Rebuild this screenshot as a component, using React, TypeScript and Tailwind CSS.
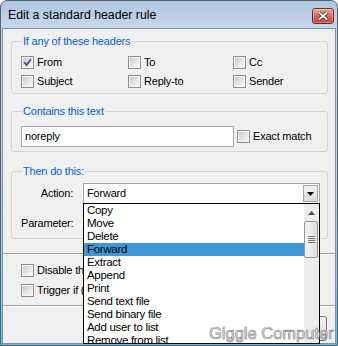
import React from "react";

const actions = [
  "Copy",
  "Move",
  "Delete",
  "Forward",
  "Extract",
  "Append",
  "Print",
  "Send text file",
  "Send binary file",
  "Add user to list",
  "Remove from list",
];

function CheckBox({ checked = false }: { checked?: boolean }) {
  return (
    <span className="flex h-[13px] w-[13px] shrink-0 border border-[#8f8f8f] bg-[#f4f4f4] p-[1px]">
      <span className="flex flex-1 items-center justify-center bg-gradient-to-br from-[#c8c8c8] via-[#e4e4e4] to-[#f8f8f8]">
        {checked && (
          <svg width="9" height="9" viewBox="0 0 9 9">
            <path d="M1.2 4.2 L3.6 7 L8 1.2" fill="none" stroke="#3e4f8e" strokeWidth="1.8" />
          </svg>
        )}
      </span>
    </span>
  );
}

function Check({ label, checked, className = "" }: { label: string; checked?: boolean; className?: string }) {
  return (
    <label className={`flex items-center gap-[3px] whitespace-nowrap ${className}`}>
      <CheckBox checked={checked} />
      <span>{label}</span>
    </label>
  );
}

function Group({ title, className = "", children }: { title: string; className?: string; children: React.ReactNode }) {
  return (
    <fieldset className={`ml-[8px] mr-[7px] rounded-[3px] border border-[#d3d3d3] pl-[9px] pr-[7px] ${className}`}>
      <legend className="ml-[1px] px-[1px] leading-[14px] text-[#0a5fd0]">{title}</legend>
      {children}
    </fieldset>
  );
}

function CloseButton() {
  return (
    <div className="flex h-[16px] w-[22px] items-center justify-center rounded-[3px] border border-[#6e2b22] bg-gradient-to-b from-[#e9ab9b] via-[#d26c5d] to-[#bf4a3b] shadow-[inset_0_0_0_1px_rgba(255,255,255,0.3)]">
      <svg width="12" height="10" viewBox="0 0 12 10">
        <path d="M2 1.5 L10 8.5 M10 1.5 L2 8.5" stroke="#4a1812" strokeWidth="3.4" />
        <path d="M2 1.5 L10 8.5 M10 1.5 L2 8.5" stroke="#ffffff" strokeWidth="1.9" />
      </svg>
    </div>
  );
}

export default function App() {
  return (
    <div className="relative h-[346px] w-[338px] overflow-hidden bg-white font-['Liberation_Sans',Arial,sans-serif] text-[11px] tracking-[-0.2px] text-black">
      <div className="flex h-full w-full flex-col rounded-t-[7px] border border-[#56626f] bg-[linear-gradient(to_bottom,#afc6df_0px,#c5d8ec_27px,#bed4ea_150px,#8fcbec_280px,#4fc2f0_346px)] px-[1px] pb-[1px]">
        {/* title bar */}
        <div className="flex h-[27px] items-center justify-between pl-[6px] pr-[2px] pt-[2px]">
          <span className="text-[12.3px] tracking-normal">Edit a standard header rule</span>
          <CloseButton />
        </div>

        {/* client area */}
        <div className="flex flex-1 flex-col border border-[#7f93a8] bg-[#f0f0f0]">
          <Group title="If any of these headers" className="mt-[5px] pb-[2px] pt-[5px]">
            <div className="grid grid-cols-[107px_105px_1fr] grid-rows-[19px_19px]">
              <Check label="From" checked />
              <Check label="To" />
              <Check label="Cc" />
              <Check label="Subject" />
              <Check label="Reply-to" />
              <Check label="Sender" />
            </div>
          </Group>

          <Group title="Contains this text" className="mt-[10px] pb-[4px] pt-[8px]">
            <div className="flex items-center">
              <div className="flex h-[21px] w-[213px] items-center border border-[#a7abb0] bg-white pl-[3px]">noreply</div>
              <Check label="Exact match" className="ml-[3px]" />
            </div>
          </Group>

          <Group title="Then do this:" className="mt-[12px] pb-[4px] pt-[5px]">
            <div className="flex h-[21px] items-center">
              <span className="w-[52px] text-right">Action:</span>
              <div className="ml-[10px] flex h-[21px] w-[237px] shrink-0 items-center justify-between border border-[#a3a3a3] bg-white pl-[3px] pr-[1px]">
                <span>Forward</span>
                <span className="flex h-[17px] w-[15px] items-center justify-center border border-[#a5a5a5] bg-gradient-to-b from-[#f2f2f2] to-[#dcdcdc]">
                  <svg width="7" height="4" viewBox="0 0 7 4">
                    <path d="M0 0 H7 L3.5 4 Z" fill="#000" />
                  </svg>
                </span>
              </div>
            </div>
            <div className="mt-[9px] flex h-[21px] items-center">
              <span className="w-[52px] text-right">Parameter:</span>
              <div className="ml-[10px] h-[21px] w-[237px] shrink-0 border border-[#a7abb0] bg-white" />
            </div>
          </Group>

          <div className="mt-[14px] h-[2px] border-t border-[#a0a0a0] bg-white" />
          <div className="mt-[5px] flex flex-col pl-[18px]">
            <Check label="Disable this rule" className="h-[20px]" />
            <Check label="Trigger if (all conditions match)" className="h-[20px]" />
          </div>
          <div className="mt-[5px] h-[2px] border-t border-[#a0a0a0] bg-white" />

          <div className="mt-[9px] flex justify-end gap-[6px] pr-[8px]">
            <div className="flex h-[25px] w-[75px] items-center justify-center rounded-[3px] border border-[#707070] bg-gradient-to-b from-[#f2f2f2] to-[#d6d6d6]">OK</div>
            <div className="flex h-[25px] w-[75px] items-center justify-center rounded-[3px] border border-[#707070] bg-gradient-to-b from-[#f2f2f2] to-[#d6d6d6]">Cancel</div>
          </div>
        </div>
      </div>

      {/* open drop-down list */}
      <div className="absolute left-[83px] top-[203px] flex h-[141px] w-[237px] border border-black bg-white">
        <ul className="flex-1 overflow-hidden text-[11.5px] tracking-[-0.3px]">
          {actions.map((a) => (
            <li
              key={a}
              className={
                a === "Forward"
                  ? "h-[13px] whitespace-nowrap bg-[#3c97d8] pl-[3px] leading-[13px]"
                  : "h-[13px] whitespace-nowrap pl-[3px] leading-[13px]"
              }
            >
              {a}
            </li>
          ))}
        </ul>
        <div className="flex w-[15px] flex-col bg-[#ededed]">
          <div className="flex h-[17px] items-center justify-center">
            <svg width="7" height="4" viewBox="0 0 7 4">
              <path d="M0 4 H7 L3.5 0 Z" fill="#505050" />
            </svg>
          </div>
          <div className="mr-[1px] flex h-[37px] flex-col items-center justify-center gap-[1px] rounded-[2px] border border-[#979797] bg-gradient-to-r from-[#f4f4f4] to-[#dedede]">
            <span className="h-[1px] w-[7px] bg-[#7a7a7a]" />
            <span className="h-[1px] w-[7px] bg-[#7a7a7a]" />
            <span className="h-[1px] w-[7px] bg-[#7a7a7a]" />
            <span className="h-[1px] w-[7px] bg-[#7a7a7a]" />
          </div>
        </div>
      </div>

      {/* watermark */}
      <div className="absolute left-[209px] top-[324px] text-[16.5px] leading-[19px] tracking-normal text-[#f2f2f2] [-webkit-text-stroke:0.7px_#8a8a8a]">
        Giggle Computer
      </div>
    </div>
  );
}
